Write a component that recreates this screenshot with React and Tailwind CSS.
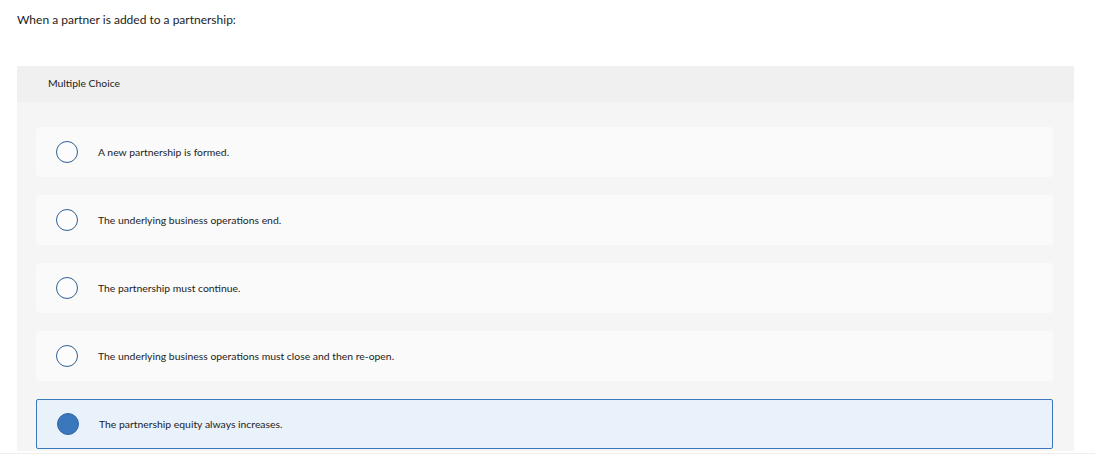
const options = [
  "A new partnership is formed.",
  "The underlying business operations end.",
  "The partnership must continue.",
  "The underlying business operations must close and then re-open.",
  "The partnership equity always increases.",
];

function Radio({ checked }) {
  return checked ? (
    <span className="block w-[22px] h-[22px] rounded-full bg-[#3a77bd] border border-[#2f64a3]" />
  ) : (
    <span className="block w-[22px] h-[22px] rounded-full border-[1.5px] border-[#2e5f93] bg-white/40" />
  );
}

export default function App() {
  const selected = 4;
  return (
    <div className="bg-white w-[1095px] h-[459px] overflow-hidden font-['Lato',sans-serif] text-[#222]">
      <p className="pl-[17px] pt-[13px] text-[12px] leading-[14px]">
        When a partner is added to a partnership:
      </p>
      <div className="mt-[39px] ml-[17px] w-[1057px] bg-[#f5f5f5] pb-[2px]">
        <div className="h-[36px] bg-[#f0f0f0] flex items-center pl-[31px] text-[10.4px]">
          Multiple Choice
        </div>
        <div className="flex flex-col gap-[18px] pt-[25px] pl-[19px] pr-[21px]">
          {options.map((text, i) => (
            <div
              key={i}
              className={
                i === selected
                  ? "h-[50px] flex items-center bg-[#e9f1fa] border border-[#3a77bd] rounded-[2px]"
                  : "h-[50px] flex items-center bg-[#fafafa] rounded-[2px]"
              }
            >
              <div className="w-[62px] flex justify-center">
                <Radio checked={i === selected} />
              </div>
              <span className="text-[10.4px] leading-[12px]">{text}</span>
            </div>
          ))}
        </div>
      </div>
      <div className="mt-[2px] h-px bg-[#eeeeee]" />
    </div>
  );
}
